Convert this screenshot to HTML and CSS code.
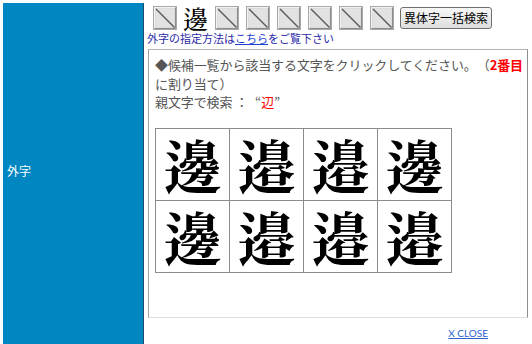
FILE: index.html
```html
<!DOCTYPE html>
<html lang="ja">
<head>
<meta charset="utf-8">
<title>外字</title>
<link rel="stylesheet" href="styles.css">
</head>
<body>
<svg class="defs" width="0" height="0" aria-hidden="true">
  <symbol id="broken" viewBox="0 0 24 24">
    <rect x="0.5" y="0.5" width="23" height="23" fill="#d6d6d6" stroke="#a8a8a8"/>
    <path d="M1.5 22.5 V1.5 H22.5" fill="none" stroke="#f2f2f2"/>
    <path d="M1.5 22.5 H22.5 V1.5" fill="none" stroke="#8c8c8c"/>
    <rect x="2.5" y="2.5" width="19" height="19" fill="#e2e2e2"/>
    <line x1="3" y1="3" x2="21.5" y2="21.5" stroke="#5a5a5a" stroke-width="1.4"/>
  </symbol>
</svg>
<div class="page">
  <div class="side"><span class="side-label">外字</span></div>
  <div class="main">
    <div class="toolbar">
      <svg class="bimg"><use href="#broken"/></svg>
      <span class="cur-char">邊</span>
      <svg class="bimg"><use href="#broken"/></svg>
      <svg class="bimg"><use href="#broken"/></svg>
      <svg class="bimg"><use href="#broken"/></svg>
      <svg class="bimg"><use href="#broken"/></svg>
      <svg class="bimg"><use href="#broken"/></svg>
      <svg class="bimg"><use href="#broken"/></svg>
      <button class="btn">異体字一括検索</button>
    </div>
    <div class="note">外字の指定方法は<a href="#" class="note-link">こちら</a>をご覧下さい</div>
    <div class="panel">
      <p class="msg">◆候補一覧から該当する文字をクリックしてください。（<b class="red">2番目</b>に割り当て）</p>
      <p class="msg">親文字で検索 ：<span class="fw-open">“</span><span class="red-n">辺</span><span class="fw-close">”</span></p>
      <table class="cands">
        <tr><td>邊</td><td>邉</td><td>邉</td><td>邊</td></tr>
        <tr><td>邊</td><td>邉</td><td>邉</td><td>邉</td></tr>
      </table>
    </div>
    <div class="footer"><a href="#" class="close">X CLOSE</a></div>
  </div>
</div>
</body>
</html>
```
FILE: styles.css
```css
html, body {
  margin: 0;
  padding: 0;
  background: #ffffff;
}
.defs {
  position: absolute;
  width: 0;
  height: 0;
}
.page {
  display: flex;
  height: 344px;
  box-sizing: border-box;
  padding: 3px 0 0 3px;
  font-family: "Noto Sans CJK JP", "Noto Sans", sans-serif;
  text-spacing-trim: space-all;
}
.side {
  width: 141px;
  flex: none;
  background: #0086c0;
  border-right: 1px solid #1d4d6c;
  display: flex;
  align-items: center;
  padding-left: 4px;
  box-sizing: border-box;
}
.side-label {
  color: #ffffff;
  font-size: 12px;
  margin-top: -7px;
}
.main {
  margin-left: 3px;
  display: flex;
  flex-direction: column;
  width: 381px;
}
.toolbar {
  display: flex;
  align-items: center;
  gap: 7px;
  padding-left: 6px;
  margin-top: 2px;
  height: 26px;
  flex: none;
}
.bimg {
  width: 24px;
  height: 24px;
  flex: none;
}
.cur-char {
  font-family: "Noto Serif CJK JP", "Noto Sans CJK JP", serif;
  font-weight: 500;
  font-size: 25px;
  line-height: 26px;
  color: #000;
  margin-left: -1px;
}
.btn {
  margin-left: -1px;
  height: 22px;
  padding: 0 3px;
  font-family: "Noto Sans CJK JP", sans-serif;
  font-size: 12px;
  line-height: 20px;
  color: #000;
  background: linear-gradient(#f7f7f7, #dedede);
  border: 1px solid #707070;
  border-radius: 3px;
}
.note {
  font-size: 11px;
  line-height: 14px;
  color: #2a2aa8;
  margin-bottom: 4px;
  white-space: nowrap;
  flex: none;
}
.note-link {
  color: #1a3fd0;
  text-decoration: underline;
}
.panel {
  flex: none;
  margin-left: 1px;
  width: 380px;
  height: 269px;
  box-sizing: border-box;
  border: 1px solid #b4b4b4;
  border-left-color: #a0a0a0;
  border-bottom-color: #dcdcdc;
  border-right-color: #8e8e8e;
  padding: 6px 1px 0 6px;
}
.msg {
  margin: 0;
  font-size: 13px;
  line-height: 18.5px;
  letter-spacing: -0.1px;
  color: #555555;
}
.red {
  color: #ff0000;
  font-weight: 700;
}
.red-n {
  color: #ff0000;
}
.fw-open {
  display: inline-block;
  width: 13px;
  text-align: right;
}
.fw-close {
  display: inline-block;
  width: 13px;
  text-align: left;
}
.cands {
  border-collapse: collapse;
  margin: 16px 0 0 0;
}
.cands td {
  border: 1px solid #8c8c8c;
  width: 73px;
  height: 71px;
  padding: 0;
  text-align: center;
  vertical-align: middle;
  font-family: "Noto Serif CJK JP", "Noto Sans CJK JP", serif;
  font-size: 58px;
  line-height: 60px;
  font-weight: 700;
  color: #000;
}
.footer {
  flex: none;
  text-align: right;
  padding-right: 40px;
  margin-top: 5px;
  line-height: 14px;
}
.close {
  font-family: "Lato", "Liberation Sans", sans-serif;
  font-size: 10px;
  color: #2f5fd0;
  text-decoration: underline;
}
```
